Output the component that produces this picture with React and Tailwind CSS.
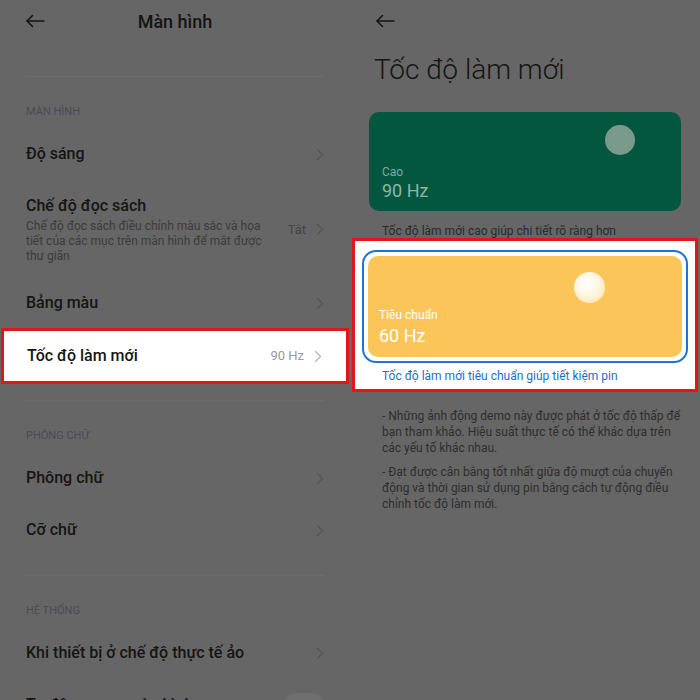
import React from 'react';

const font = { fontFamily: 'Roboto, "Noto Sans", sans-serif' };

function Arrow({ className }) {
  return (
    <svg width="20" height="14" viewBox="0 0 20 14" className={className} fill="none" stroke="currentColor" strokeWidth="1.6" strokeLinecap="round" strokeLinejoin="round">
      <path d="M19 7H2" />
      <path d="M7.5 1.5L2 7l5.5 5.5" />
    </svg>
  );
}

function Chevron({ className }) {
  return (
    <svg width="8" height="13" viewBox="0 0 8 13" className={className} fill="none" stroke="currentColor" strokeWidth="1.3" strokeLinecap="round" strokeLinejoin="round">
      <path d="M1.5 1.5l5 5-5 5" />
    </svg>
  );
}

function Row({ title, value, h = 'h-[52px]' }) {
  return (
    <div className={`${h} flex items-center justify-between px-[26px]`}>
      <span className="text-[16px] font-medium text-[#151515]">{title}</span>
      <div className="flex items-center gap-[10px]">
        {value && <span className="text-[13px] text-[#444]">{value}</span>}
        <Chevron className="text-[#565656]" />
      </div>
    </div>
  );
}

function Section({ label }) {
  return <div className="pl-[26px] h-[51px] pt-[27px] text-[11px] leading-[16px] text-[#4b4b55] uppercase">{label}</div>;
}

function Divider() {
  return <div className="mx-[26px] h-px bg-[#6c6c6c]" />;
}

function LeftPanel() {
  return (
    <div className="w-[350px] h-[700px] overflow-hidden">
      <div className="h-[42px] relative flex items-center justify-center">
        <Arrow className="absolute left-[25px] top-[14px] text-[#151515]" />
        <span className="text-[18px] font-medium text-[#151515]">Màn hình</span>
      </div>
      <div className="h-[34px]" />
      <Divider />
      <Section label="Màn hình" />
      <Row title="Độ sáng" />
      <div className="h-[98px] px-[26px] pt-[15px] flex items-start justify-between">
        <div className="w-[250px]">
          <div className="text-[16px] font-medium text-[#151515] leading-[22px]">Chế độ đọc sách</div>
          <div className="text-[12px] text-[#3c3c3c] leading-[15px] mt-[2px]">
            Chế độ đọc sách điều chỉnh màu sắc và họa tiết của các mục trên màn hình để mắt được thư giãn
          </div>
        </div>
        <div className="flex items-center gap-[10px] mt-[25px]">
          <span className="text-[13px] text-[#444]">Tắt</span>
          <Chevron className="text-[#565656]" />
        </div>
      </div>
      <Row title="Bảng màu" h="h-[50px]" />
      <div className="mx-[1px] h-[56px] border-[3px] border-[#e3141b] bg-white flex items-center justify-between pl-[23px] pr-[24px]">
        <span className="text-[16px] font-medium text-[#151515]">Tốc độ làm mới</span>
        <div className="flex items-center gap-[10px]">
          <span className="text-[13px] text-[#9a9a9a]">90 Hz</span>
          <Chevron className="text-[#b5b5b5]" />
        </div>
      </div>
      <div className="h-[16px]" />
      <Divider />
      <Section label="Phông chữ" />
      <Row title="Phông chữ" />
      <Row title="Cỡ chữ" />
      <div className="h-[19px]" />
      <Divider />
      <Section label="Hệ thống" />
      <Row title="Khi thiết bị ở chế độ thực tế ảo" />
      <div className="h-[52px] flex items-center justify-between px-[26px]">
        <span className="text-[16px] font-medium text-[#151515]">Tự động xoay màn hình</span>
        <div className="w-[40px] h-[24px] rounded-full bg-[#6f6f6f]" />
      </div>
    </div>
  );
}

function RightPanel() {
  return (
    <div className="w-[350px] h-[700px] overflow-hidden">
      <div className="h-[42px] flex items-center pl-[25px]">
        <Arrow className="text-[#151515]" />
      </div>
      <div className="h-[56px] flex items-center pl-[24px] text-[28px] font-light text-[#151515]">Tốc độ làm mới</div>
      <div className="h-[14px]" />
      <div className="mx-[19px] h-[99px] rounded-[10px] bg-[#03573f] relative">
        <div className="absolute left-[236px] top-[13px] w-[30px] h-[30px] rounded-full bg-[#7a9b8c]" />
        <div className="absolute left-[13px] top-[51px] text-[12px] text-[#86a89b]">Cao</div>
        <div className="absolute left-[13px] top-[65px] text-[18px] text-[#92b3a6]">90 Hz</div>
      </div>
      <div className="h-[27px] flex items-end pl-[32px] text-[12px] leading-[14px] text-[#2a2a2a]">Tốc độ làm mới cao giúp chi tiết rõ ràng hơn</div>
      <div className="mx-[2px] h-[154px] border-[3px] border-[#e3141b] bg-white px-[7px] pt-[9px]">
        <div className="h-[113px] rounded-[14px] border-2 border-[#1f74d3] p-[4px]">
          <div className="h-full rounded-[10px] bg-[#fcc55a] relative">
            <div className="absolute left-[206px] top-[16px] w-[31px] h-[31px] rounded-full bg-[radial-gradient(circle_at_42%_38%,#ffffff_0%,#fff6e2_45%,#fbdda0_100%)]" />
            <div className="absolute left-[11px] top-[50px] text-[12px] text-white">Tiêu chuẩn</div>
            <div className="absolute left-[11px] top-[66px] text-[18px] text-white">60 Hz</div>
          </div>
        </div>
        <div className="pl-[20px] pt-[4px] text-[12px] text-[#1d6fc6]">Tốc độ làm mới tiêu chuẩn giúp tiết kiệm pin</div>
      </div>
      <div className="pl-[32px] pr-[12px] pt-[16px] text-[12px] leading-[16px] text-[#2e2e2e]">
        <p>- Những ảnh động demo này được phát ở tốc độ thấp để bạn tham khảo. Hiệu suất thực tế có thể khác dựa trên các yếu tố khác nhau.</p>
        <p className="mt-[8px]">- Đạt được cân bằng tốt nhất giữa độ mượt của chuyển động và thời gian sử dụng pin bằng cách tự động điều chỉnh tốc độ làm mới.</p>
      </div>
    </div>
  );
}

export default function App() {
  return (
    <div className="w-[700px] h-[700px] bg-[#666666] flex overflow-hidden" style={font}>
      <LeftPanel />
      <RightPanel />
    </div>
  );
}
